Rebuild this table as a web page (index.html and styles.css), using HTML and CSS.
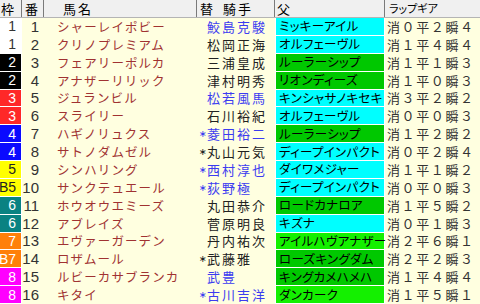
FILE: index.html
```html
<!DOCTYPE html>
<html lang="ja">
<head>
<meta charset="utf-8">
<title>出走表</title>
<link rel="stylesheet" href="styles.css">
</head>
<body>
<div class="table">
  <div class="row head">
    <div class="hc hwaku">枠</div>
    <div class="hc hban">番</div>
    <div class="hc hname">馬名</div>
    <div class="hc hjockey"><span class="kae">替</span>騎手</div>
    <div class="hc hsire">父</div>
    <div class="hc hlap">ラップギア</div>
  </div>

  <div class="row">
    <div class="waku w1">1</div><div class="ban">1</div><div class="name">シャーレイポビー</div>
    <div class="jockey blue"><span class="mark"></span>鮫島克駿</div><div class="sire cyan">ミッキーアイル</div><div class="lap">消０平２瞬４</div>
  </div>
  <div class="row">
    <div class="waku w1">1</div><div class="ban">2</div><div class="name">クリノプレミアム</div>
    <div class="jockey"><span class="mark"></span>松岡正海</div><div class="sire cyan">オルフェーヴル</div><div class="lap">消１平４瞬４</div>
  </div>
  <div class="row">
    <div class="waku w2">2</div><div class="ban">3</div><div class="name">フェアリーポルカ</div>
    <div class="jockey"><span class="mark"></span>三浦皇成</div><div class="sire green">ルーラーシップ</div><div class="lap">消１平１瞬３</div>
  </div>
  <div class="row">
    <div class="waku w2">2</div><div class="ban">4</div><div class="name">アナザーリリック</div>
    <div class="jockey"><span class="mark"></span>津村明秀</div><div class="sire green">リオンディーズ</div><div class="lap">消１平０瞬３</div>
  </div>
  <div class="row">
    <div class="waku w3">3</div><div class="ban">5</div><div class="name">ジュランビル</div>
    <div class="jockey blue"><span class="mark"></span>松若風馬</div><div class="sire cyan">キンシャサノキセキ</div><div class="lap">消３平２瞬２</div>
  </div>
  <div class="row">
    <div class="waku w3">3</div><div class="ban">6</div><div class="name">スライリー</div>
    <div class="jockey"><span class="mark"></span>石川裕紀</div><div class="sire cyan">オルフェーヴル</div><div class="lap">消０平０瞬３</div>
  </div>
  <div class="row">
    <div class="waku w4">4</div><div class="ban">7</div><div class="name">ハギノリュクス</div>
    <div class="jockey blue"><span class="mark">∗</span>菱田裕二</div><div class="sire green">ルーラーシップ</div><div class="lap">消１平２瞬２</div>
  </div>
  <div class="row">
    <div class="waku w4">4</div><div class="ban">8</div><div class="name">サトノダムゼル</div>
    <div class="jockey"><span class="mark">∗</span>丸山元気</div><div class="sire cyan">ディープインパクト</div><div class="lap">消０平２瞬４</div>
  </div>
  <div class="row">
    <div class="waku w5">5</div><div class="ban">9</div><div class="name">シンハリング</div>
    <div class="jockey blue"><span class="mark">∗</span>西村淳也</div><div class="sire cyan">ダイワメジャー</div><div class="lap">消１平１瞬２</div>
  </div>
  <div class="row">
    <div class="waku w5">B5</div><div class="ban">10</div><div class="name">サンクテュエール</div>
    <div class="jockey blue"><span class="mark">∗</span>荻野極</div><div class="sire cyan">ディープインパクト</div><div class="lap">消０平０瞬３</div>
  </div>
  <div class="row">
    <div class="waku w6">6</div><div class="ban">11</div><div class="name">ホウオウエミーズ</div>
    <div class="jockey"><span class="mark"></span>丸田恭介</div><div class="sire green">ロードカナロア</div><div class="lap">消１平５瞬２</div>
  </div>
  <div class="row">
    <div class="waku w6">6</div><div class="ban">12</div><div class="name">アブレイズ</div>
    <div class="jockey"><span class="mark"></span>菅原明良</div><div class="sire cyan">キズナ</div><div class="lap">消０平１瞬３</div>
  </div>
  <div class="row">
    <div class="waku w7">7</div><div class="ban">13</div><div class="name">エヴァーガーデン</div>
    <div class="jockey"><span class="mark"></span>丹内祐次</div><div class="sire lime">アイルハヴアナザー</div><div class="lap">消２平６瞬１</div>
  </div>
  <div class="row">
    <div class="waku w7">B7</div><div class="ban">14</div><div class="name">ロザムール</div>
    <div class="jockey"><span class="mark">∗</span>武藤雅</div><div class="sire green">ローズキングダム</div><div class="lap">消２平２瞬３</div>
  </div>
  <div class="row">
    <div class="waku w8">8</div><div class="ban">15</div><div class="name">ルビーカサブランカ</div>
    <div class="jockey blue"><span class="mark"></span>武豊</div><div class="sire green">キングカメハメハ</div><div class="lap">消１平４瞬４</div>
  </div>
  <div class="row">
    <div class="waku w8">8</div><div class="ban">16</div><div class="name">キタイ</div>
    <div class="jockey blue"><span class="mark">∗</span>古川吉洋</div><div class="sire lime">ダンカーク</div><div class="lap">消１平５瞬１</div>
  </div>
</div>
</body>
</html>
```

FILE: styles.css
```css
* {
  box-sizing: border-box;
  margin: 0;
  padding: 0;
}

html, body {
  width: 480px;
  height: 304px;
  overflow: hidden;
}

body {
  background: #ffffe0;
  font-family: "Noto Sans CJK JP", sans-serif;
  color: #000;
}

.table {
  display: grid;
  grid-template-rows: 18px repeat(16, 1fr);
  height: 304px;
}

.row {
  display: grid;
  grid-template-columns: 22px 22px 153px 78px 110px 95px;
  min-height: 0;
}

.row > div {
  display: flex;
  align-items: center;
  white-space: nowrap;
  line-height: 16px;
  min-width: 0;
}

/* header */
.head {
  background: #f0f0f0;
  border-bottom: 1px solid #b4b4b4;
}

.head > .hc {
  border-right: 1px solid #7a7a7a;
  font-size: 13px;
  line-height: 15px;
  align-items: flex-end;
  padding-bottom: 1px;
}

.hwaku { padding-left: 1px; }
.hban { padding-left: 3px; }
.hname { padding-left: 19px; letter-spacing: 2px; }
.hjockey { padding-left: 3px; letter-spacing: 2px; }
.kae { margin-right: 8px; }
.hsire { padding-left: 2px; }
.hlap {
  border-right: none !important;
  padding-left: 4px;
  font-size: 11px !important;
  font-feature-settings: "palt";
}

/* body cells */
.waku {
  justify-content: flex-end;
  padding-right: 5px;
  font-family: "Liberation Sans Narrow", "Liberation Sans", sans-serif;
  font-size: 14px;
  color: #fff;
  border-right: 1px solid #fff;
  border-bottom: 1px solid #fff;
}

.w1 { background: #ffffff; color: #333; }
.w2 { background: #000000; }
.w3 { background: #ff2828; }
.w4 { background: #0a0aff; }
.w5 { background: #ffff00; color: #222; }
.w6 { background: #0a8282; }
.w7 { background: #ff800a; }
.w8 { background: #ff00ff; }

.ban {
  justify-content: flex-end;
  padding-right: 5px;
  font-family: "Liberation Sans Narrow", "Liberation Sans", sans-serif;
  font-size: 15px;
  color: #333;
}

.name {
  padding-left: 13px;
  font-size: 12.5px;
  letter-spacing: 1.1px;
  color: #a03232;
}

.jockey {
  padding-left: 2px;
  font-size: 13px;
  letter-spacing: 2px;
  color: #222;
}

.jockey.blue { color: #3c3cf0; }

.mark {
  display: inline-block;
  width: 8px;
  letter-spacing: 0;
  font-family: "DejaVu Sans", sans-serif;
  font-size: 9.5px;
}

.sire {
  padding-left: 3px;
  font-size: 12.5px;
  letter-spacing: 0.3px;
  font-feature-settings: "palt";
  color: #000;
  border-left: 1px solid #fff;
  border-right: 1px solid #fff;
  border-bottom: 1px solid #fff;
}

.cyan { background: #00ffff; }
.green { background: #00c800; }
.lime { background: #14f000; }

.lap {
  padding-left: 2px;
  font-size: 13px;
  letter-spacing: 1.6px;
  color: #333;
}
```
